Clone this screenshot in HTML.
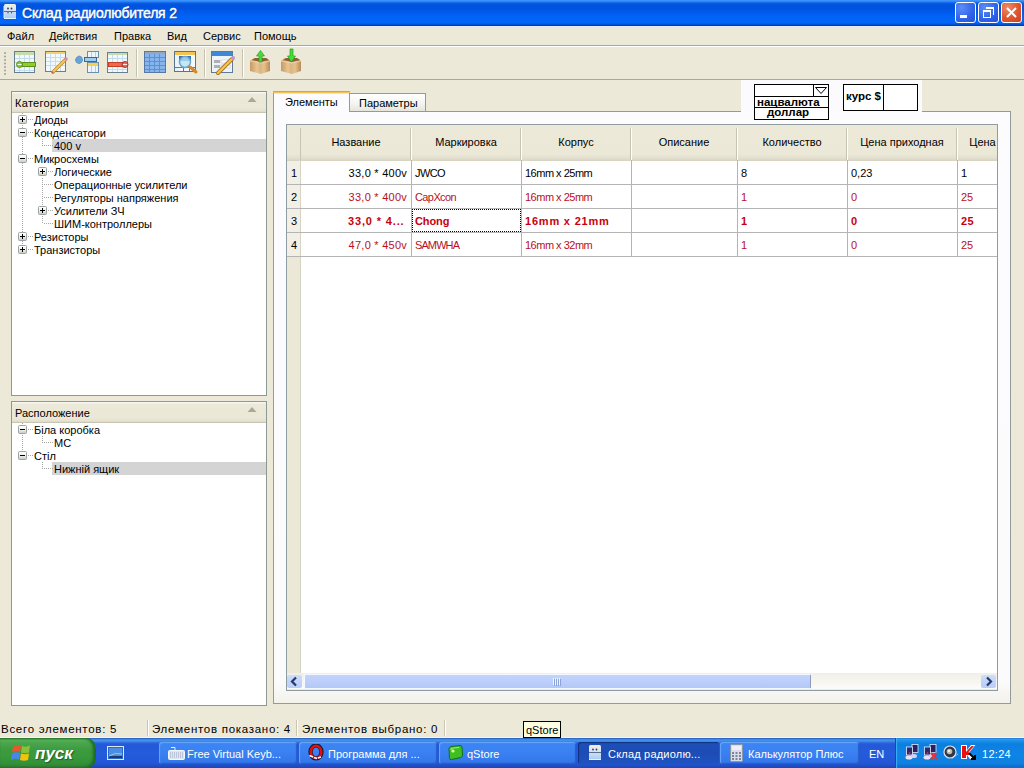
<!DOCTYPE html>
<html><head><meta charset="utf-8">
<style>
*{box-sizing:border-box;margin:0;padding:0}
html,body{width:1024px;height:768px;overflow:hidden;background:#ece9d8;font-family:"Liberation Sans",sans-serif;font-size:11px;color:#000}
.a{position:absolute}
.t{position:absolute;white-space:nowrap;line-height:13px}
#title{left:0;top:0;width:1024px;height:26px;background:linear-gradient(#3d95ff 0,#3a90fc 1px,#0b5fe4 3px,#0053de 5px,#0054e0 9px,#005bec 12px,#0064f7 17px,#0067f6 23px,#0048c8 25px,#002e9a 26px)}
#menu{left:0;top:26px;width:1024px;height:20px;background:linear-gradient(#e6ecfa 0,#e6ecfa 1px,#ece9d8 1px);border-bottom:1px solid #aca899}
.panel{position:absolute;border:1px solid #8b9894;background:#fff}
.phead{position:absolute;left:0;top:0;right:0;height:21px;background:linear-gradient(#f6f6f2 0,#f6f6f2 1px,#ece9d9 2px,#ebe8d8 16px,#e4e1d0 19px,#dcd8c6 20px);border-bottom:1px solid #c9c5b3}
.tb{position:absolute;width:9px;height:9px;border:1px solid #919b9c;background:linear-gradient(#fff,#f0efe8 50%,#cfcbbd)}
.tb:before{content:"";position:absolute;left:1px;top:3px;width:5px;height:1px;background:#000}
.tb.p:after{content:"";position:absolute;left:3px;top:1px;width:1px;height:5px;background:#000}
.dv{position:absolute;width:1px;border-left:1px dotted #a0a0a0}
.dh{position:absolute;height:1px;border-top:1px dotted #a0a0a0}
</style></head><body>
<div id="title" class="a"></div>
<div class="t" style="left:22px;top:5px;color:#fff;font-size:14px;line-height:17px;letter-spacing:-0.2px;-webkit-text-stroke:0.45px #fff;text-shadow:1px 1px 0 #0a3aa0">Склад радиолюбителя 2</div>
<!-- title buttons -->
<div class="a" style="left:955px;top:2px;width:21px;height:21px;border:1px solid #fff;border-radius:3px;background:radial-gradient(circle at 30% 25%,#5b8df8,#2f62e8 60%,#2352d6)"></div>
<div class="a" style="left:960px;top:15px;width:7px;height:3px;background:#fff"></div>
<div class="a" style="left:978px;top:2px;width:21px;height:21px;border:1px solid #fff;border-radius:3px;background:radial-gradient(circle at 30% 25%,#5b8df8,#2f62e8 60%,#2352d6)"></div>
<div class="a" style="left:986px;top:7px;width:8px;height:8px;border:1px solid #fff;border-top-width:2px;border-left:none;border-bottom:none"></div>
<div class="a" style="left:983px;top:10px;width:8px;height:8px;border:1px solid #fff;border-top-width:2px"></div>
<div class="a" style="left:1001px;top:2px;width:21px;height:21px;border:1px solid #fff;border-radius:3px;background:radial-gradient(circle at 30% 25%,#f08a6a,#e0542e 55%,#cc4020)"></div>
<svg class="a" style="left:1001px;top:2px" width="21" height="21"><path d="M6 6 L15 15 M15 6 L6 15" stroke="#fff" stroke-width="2"/></svg>
<!-- app icon -->
<svg class="a" style="left:3px;top:4px" width="14" height="16"><defs><linearGradient id="ai" x1="0" y1="0" x2="0" y2="1"><stop offset="0" stop-color="#f4eedc"/><stop offset="0.25" stop-color="#e4e8f4"/><stop offset="0.6" stop-color="#c8dcf4"/><stop offset="1" stop-color="#a8c8ee"/></linearGradient></defs>
<rect x="1" y="0" width="12" height="15" rx="1.5" fill="url(#ai)"/>
<rect x="0.5" y="2" width="1" height="12" fill="#d8ecff"/>
<rect x="1" y="7" width="12" height="1" fill="#56708e"/>
<circle cx="5" cy="4.5" r="0.9" fill="#2a3a5a"/><circle cx="8.5" cy="4.5" r="0.9" fill="#2a3a5a"/>
<circle cx="5" cy="8.7" r="0.7" fill="#3a4a6a"/><circle cx="8.5" cy="8.7" r="0.7" fill="#3a4a6a"/>
<rect x="1" y="14" width="12" height="1" fill="#e0f4ff"/>
</svg>
<div id="menu" class="a"></div>
<div class="t" style="left:7px;top:30px">Файл</div>
<div class="t" style="left:49px;top:30px">Действия</div>
<div class="t" style="left:114px;top:30px">Правка</div>
<div class="t" style="left:167px;top:30px">Вид</div>
<div class="t" style="left:203px;top:30px">Сервис</div>
<div class="t" style="left:254px;top:30px">Помощь</div>
<!-- toolbar -->
<div class="a" style="left:0;top:46px;width:1024px;height:1px;background:#fff"></div>
<div class="a" style="left:0;top:47px;width:1024px;height:33px;background:#ece9d8;border-bottom:1px solid #aca899"></div>

<svg class="a" style="left:0;top:47px" width="320" height="33" viewBox="0 47 320 33">
<g fill="#a09e90"><circle cx="5" cy="53" r="1"/><circle cx="5" cy="56.5" r="1"/><circle cx="5" cy="60" r="1"/><circle cx="5" cy="63.5" r="1"/><circle cx="5" cy="67" r="1"/><circle cx="5" cy="70.5" r="1"/><circle cx="5" cy="74" r="1"/></g>
<!-- icon1 -->
<rect x="14.5" y="51.5" width="20" height="21" fill="#f2f8fc" stroke="#68808e"/>
<rect x="15" y="52" width="19" height="3" fill="#c4dcb0"/>
<g stroke="#c4dcef" stroke-width="1"><path d="M15 58.5h19M15 62.5h19M15 66.5h19M15 70.5h19M19.5 55v17M24.5 55v17M29.5 55v17"/></g>
<rect x="22.5" y="62.5" width="13" height="4" fill="#94cc2e" stroke="#5a9418"/>
<circle cx="19.5" cy="64.5" r="3" fill="#94cc2e" stroke="#5a9418"/>
<path d="M17.5 64.5 h4" stroke="#f4fff0" stroke-width="1"/>
<!-- icon2 -->
<rect x="45.5" y="51.5" width="20" height="20" fill="#f2f8fc" stroke="#68808e"/>
<rect x="46" y="52" width="19" height="2" fill="#f3d070"/>
<g stroke="#c4dcef"><path d="M46 57.5h19M46 61.5h19M46 65.5h19M50.5 54v17M55.5 54v17M60.5 54v17"/></g>
<path d="M53 72 L65.5 59.5" stroke="#b8842a" stroke-width="3.2" stroke-linecap="round"/>
<path d="M53 72 L65.5 59.5" stroke="#f8c858" stroke-width="1.8" stroke-linecap="round"/>
<circle cx="66" cy="59" r="1.8" fill="#c890c0"/>
<circle cx="52.5" cy="72.5" r="1" fill="#c85a48"/>
<!-- icon3 -->
<path d="M76.5 57.5 L79 56 L81.5 57 L82.5 60 L81.5 62.5 L79 63.5 L76.5 62.5 L75.5 60 Z" fill="#6aa4d4" stroke="#5b96c8"/>
<rect x="87.5" y="51.5" width="11" height="6" fill="#eef6fc" stroke="#6a90ae"/>
<path d="M91.5 52v5M95.5 52v5" stroke="#b0d0e8"/>
<rect x="84.5" y="57.5" width="12" height="4" fill="#9ccdf0" stroke="#3a6a90"/>
<rect x="87.5" y="62.5" width="11" height="10" fill="#eef6fc" stroke="#6a90ae"/>
<rect x="88" y="63" width="10" height="3" fill="#f6d054"/>
<path d="M91.5 66v6M95.5 66v6" stroke="#b0d0e8"/>
<!-- icon4 -->
<rect x="107.5" y="52.5" width="20" height="20" fill="#f2f8fc" stroke="#68808e"/>
<rect x="108" y="53" width="19" height="2" fill="#c4dcb0"/>
<g stroke="#c4dcef"><path d="M108 58.5h19M108 69.5h19M112.5 55v17M117.5 55v17M122.5 55v17"/></g>
<rect x="108.5" y="62.5" width="15" height="4" fill="#f06848" stroke="#c04028"/>
<circle cx="125" cy="64.5" r="3" fill="#f06848" stroke="#a83040"/>
<path d="M123 64.5 h4" stroke="#fff0ec" stroke-width="1"/>
<!-- sep1 -->
<rect x="136" y="49" width="1" height="28" fill="#c5c2b2"/><rect x="137" y="49" width="1" height="28" fill="#fff"/>
<!-- icon5 -->
<rect x="144.5" y="51.5" width="21" height="21" fill="#86b4ec" stroke="#5877a8"/>
<rect x="145" y="52" width="20" height="2" fill="#9aa6b8"/>
<g stroke="#5f8fd0"><path d="M145 57.5h20M145 61.5h20M145 65.5h20M145 69.5h20M149.5 54v18M154.5 54v18M159.5 54v18"/></g>
<!-- icon6 -->
<rect x="174.5" y="51.5" width="21" height="20" fill="#f4f9ff" stroke="#5d7389"/>
<rect x="175" y="52" width="20" height="3" fill="#f3c654"/>
<rect x="175" y="55" width="4" height="16" fill="#eaf2fb"/>
<path d="M175 67.5h20M183.5 67v4M189.5 67v4" stroke="#4f7ea5"/>
<rect x="179" y="56" width="12" height="5" fill="#2f72c0"/>
<circle cx="185" cy="62" r="5.5" fill="#b8e2f4" fill-opacity="0.8" stroke="#6aa6c8" stroke-width="1.5"/>
<path d="M190 67 L196 72" stroke="#d48a2a" stroke-width="3" stroke-linecap="round"/>
<!-- sep2 -->
<rect x="204" y="49" width="1" height="28" fill="#c5c2b2"/><rect x="205" y="49" width="1" height="28" fill="#fff"/>
<!-- icon7 -->
<rect x="211.5" y="51.5" width="21" height="21" fill="#eef4fb" stroke="#5d7b98"/>
<rect x="212" y="52" width="20" height="4" fill="#3e88d6"/>
<rect x="214" y="60" width="6" height="3" fill="#b0b0b0"/><rect x="221" y="60" width="9" height="3" fill="#fff" stroke="#c0c0c0" stroke-width="0.5"/>
<rect x="214" y="65" width="6" height="3" fill="#b0b0b0"/><rect x="221" y="65" width="9" height="3" fill="#fff" stroke="#c0c0c0" stroke-width="0.5"/>
<path d="M218 73 L232 59" stroke="#a8741e" stroke-width="4" stroke-linecap="round"/>
<path d="M218 73 L232 59" stroke="#f6c44a" stroke-width="2.4" stroke-linecap="round"/>
<circle cx="233" cy="58" r="2" fill="#b89ad0"/>
<!-- sep3 -->
<rect x="242" y="49" width="1" height="28" fill="#c5c2b2"/><rect x="243" y="49" width="1" height="28" fill="#fff"/>
<!-- box1 -->
<defs><linearGradient id="wood" x1="0" y1="0" x2="1" y2="0"><stop offset="0" stop-color="#c79a62"/><stop offset="0.35" stop-color="#e6c596"/><stop offset="0.5" stop-color="#dcb57e"/><stop offset="0.7" stop-color="#e4c290"/><stop offset="1" stop-color="#b98a55"/></linearGradient></defs>
<path d="M250 61 L254 58 L266 58 L270 61 L270 71 L261 74 L250 71 Z" fill="url(#wood)"/>
<path d="M252 60 L255 58 L266 58 L269 60 L261 62 Z" fill="#8d5f35"/>
<path d="M250 61 L261 63 L270 61" fill="none" stroke="#f0d8b0" stroke-width="0.8"/>
<path d="M259 62 V56 H256.5 L260.5 50.5 L264.5 56 H262 V62 Z" fill="#44dc3c" stroke="#22a01e" stroke-width="0.7"/>
<!-- box2 -->
<path d="M281 61 L285 58 L297 58 L301 61 L301 71 L292 74 L281 71 Z" fill="url(#wood)"/>
<path d="M283 60 L286 58 L297 58 L300 60 L292 62 Z" fill="#8d5f35"/>
<path d="M281 61 L292 63 L301 61" fill="none" stroke="#f0d8b0" stroke-width="0.8"/>
<path d="M290 49 H293 V56 H295.5 L291.5 62 L287.5 56 H290 Z" fill="#44dc3c" stroke="#22a01e" stroke-width="0.7"/>
</svg>

<!-- category panel -->
<div class="panel" style="left:11px;top:91px;width:256px;height:305px">
  <div class="phead"></div>
</div>
<div class="t" style="left:15px;top:97px;letter-spacing:0.3px">Категория</div>
<div class="t" style="left:34px;top:114px">Диоды</div>
<div class="t" style="left:34px;top:127px">Конденсатори</div>
<div class="a" style="left:52px;top:139px;width:214px;height:13px;background:#d4d4d4"></div>
<div class="t" style="left:54px;top:140px">400 v</div>
<div class="t" style="left:34px;top:153px">Микросхемы</div>
<div class="t" style="left:54px;top:166px">Логические</div>
<div class="t" style="left:54px;top:179px">Операционные усилители</div>
<div class="t" style="left:54px;top:192px">Регуляторы напряжения</div>
<div class="t" style="left:54px;top:205px">Усилители ЗЧ</div>
<div class="t" style="left:54px;top:218px">ШИМ-контроллеры</div>
<div class="t" style="left:34px;top:231px">Резисторы</div>
<div class="t" style="left:34px;top:244px">Транзисторы</div>
<svg class="a" style="left:0;top:0" width="270" height="768"><defs><linearGradient id="bg" x1="0" y1="0" x2="0" y2="1"><stop offset="0" stop-color="#fff"/><stop offset="0.5" stop-color="#f2f1ec"/><stop offset="1" stop-color="#c9c6b8"/></linearGradient></defs><g fill="#a5a5a5"><rect x="28" y="119" width="1" height="1"/><rect x="30" y="119" width="1" height="1"/><rect x="32" y="119" width="1" height="1"/><rect x="28" y="132" width="1" height="1"/><rect x="30" y="132" width="1" height="1"/><rect x="32" y="132" width="1" height="1"/><rect x="44" y="145" width="1" height="1"/><rect x="46" y="145" width="1" height="1"/><rect x="48" y="145" width="1" height="1"/><rect x="50" y="145" width="1" height="1"/><rect x="52" y="145" width="1" height="1"/><rect x="28" y="158" width="1" height="1"/><rect x="30" y="158" width="1" height="1"/><rect x="32" y="158" width="1" height="1"/><rect x="48" y="171" width="1" height="1"/><rect x="50" y="171" width="1" height="1"/><rect x="52" y="171" width="1" height="1"/><rect x="44" y="184" width="1" height="1"/><rect x="46" y="184" width="1" height="1"/><rect x="48" y="184" width="1" height="1"/><rect x="50" y="184" width="1" height="1"/><rect x="52" y="184" width="1" height="1"/><rect x="44" y="197" width="1" height="1"/><rect x="46" y="197" width="1" height="1"/><rect x="48" y="197" width="1" height="1"/><rect x="50" y="197" width="1" height="1"/><rect x="52" y="197" width="1" height="1"/><rect x="48" y="210" width="1" height="1"/><rect x="50" y="210" width="1" height="1"/><rect x="52" y="210" width="1" height="1"/><rect x="44" y="223" width="1" height="1"/><rect x="46" y="223" width="1" height="1"/><rect x="48" y="223" width="1" height="1"/><rect x="50" y="223" width="1" height="1"/><rect x="52" y="223" width="1" height="1"/><rect x="28" y="236" width="1" height="1"/><rect x="30" y="236" width="1" height="1"/><rect x="32" y="236" width="1" height="1"/><rect x="28" y="249" width="1" height="1"/><rect x="30" y="249" width="1" height="1"/><rect x="32" y="249" width="1" height="1"/><rect x="22" y="113" width="1" height="1"/><rect x="22" y="115" width="1" height="1"/><rect x="22" y="117" width="1" height="1"/><rect x="22" y="119" width="1" height="1"/><rect x="22" y="121" width="1" height="1"/><rect x="22" y="123" width="1" height="1"/><rect x="22" y="125" width="1" height="1"/><rect x="22" y="127" width="1" height="1"/><rect x="22" y="129" width="1" height="1"/><rect x="22" y="131" width="1" height="1"/><rect x="22" y="133" width="1" height="1"/><rect x="22" y="135" width="1" height="1"/><rect x="22" y="137" width="1" height="1"/><rect x="22" y="139" width="1" height="1"/><rect x="22" y="141" width="1" height="1"/><rect x="22" y="143" width="1" height="1"/><rect x="22" y="145" width="1" height="1"/><rect x="22" y="147" width="1" height="1"/><rect x="22" y="149" width="1" height="1"/><rect x="22" y="151" width="1" height="1"/><rect x="22" y="153" width="1" height="1"/><rect x="22" y="155" width="1" height="1"/><rect x="22" y="157" width="1" height="1"/><rect x="22" y="159" width="1" height="1"/><rect x="22" y="161" width="1" height="1"/><rect x="22" y="163" width="1" height="1"/><rect x="22" y="165" width="1" height="1"/><rect x="22" y="167" width="1" height="1"/><rect x="22" y="169" width="1" height="1"/><rect x="22" y="171" width="1" height="1"/><rect x="22" y="173" width="1" height="1"/><rect x="22" y="175" width="1" height="1"/><rect x="22" y="177" width="1" height="1"/><rect x="22" y="179" width="1" height="1"/><rect x="22" y="181" width="1" height="1"/><rect x="22" y="183" width="1" height="1"/><rect x="22" y="185" width="1" height="1"/><rect x="22" y="187" width="1" height="1"/><rect x="22" y="189" width="1" height="1"/><rect x="22" y="191" width="1" height="1"/><rect x="22" y="193" width="1" height="1"/><rect x="22" y="195" width="1" height="1"/><rect x="22" y="197" width="1" height="1"/><rect x="22" y="199" width="1" height="1"/><rect x="22" y="201" width="1" height="1"/><rect x="22" y="203" width="1" height="1"/><rect x="22" y="205" width="1" height="1"/><rect x="22" y="207" width="1" height="1"/><rect x="22" y="209" width="1" height="1"/><rect x="22" y="211" width="1" height="1"/><rect x="22" y="213" width="1" height="1"/><rect x="22" y="215" width="1" height="1"/><rect x="22" y="217" width="1" height="1"/><rect x="22" y="219" width="1" height="1"/><rect x="22" y="221" width="1" height="1"/><rect x="22" y="223" width="1" height="1"/><rect x="22" y="225" width="1" height="1"/><rect x="22" y="227" width="1" height="1"/><rect x="22" y="229" width="1" height="1"/><rect x="22" y="231" width="1" height="1"/><rect x="22" y="233" width="1" height="1"/><rect x="22" y="235" width="1" height="1"/><rect x="22" y="237" width="1" height="1"/><rect x="22" y="239" width="1" height="1"/><rect x="22" y="241" width="1" height="1"/><rect x="22" y="243" width="1" height="1"/><rect x="22" y="245" width="1" height="1"/><rect x="22" y="247" width="1" height="1"/><rect x="22" y="249" width="1" height="1"/><rect x="42" y="139" width="1" height="1"/><rect x="42" y="141" width="1" height="1"/><rect x="42" y="143" width="1" height="1"/><rect x="42" y="145" width="1" height="1"/><rect x="42" y="178" width="1" height="1"/><rect x="42" y="180" width="1" height="1"/><rect x="42" y="182" width="1" height="1"/><rect x="42" y="184" width="1" height="1"/><rect x="42" y="186" width="1" height="1"/><rect x="42" y="188" width="1" height="1"/><rect x="42" y="190" width="1" height="1"/><rect x="42" y="192" width="1" height="1"/><rect x="42" y="194" width="1" height="1"/><rect x="42" y="196" width="1" height="1"/><rect x="42" y="198" width="1" height="1"/><rect x="42" y="200" width="1" height="1"/><rect x="42" y="202" width="1" height="1"/><rect x="42" y="204" width="1" height="1"/><rect x="42" y="206" width="1" height="1"/><rect x="42" y="208" width="1" height="1"/><rect x="42" y="210" width="1" height="1"/><rect x="42" y="212" width="1" height="1"/><rect x="42" y="214" width="1" height="1"/><rect x="42" y="216" width="1" height="1"/><rect x="42" y="218" width="1" height="1"/><rect x="42" y="220" width="1" height="1"/><rect x="42" y="222" width="1" height="1"/></g><rect x="18.5" y="115.5" width="8" height="8" rx="1" fill="url(#bg)" stroke="#9aa3a6"/><rect x="20" y="119" width="5" height="1" fill="#000"/><rect x="22" y="117" width="1" height="5" fill="#000"/><rect x="18.5" y="128.5" width="8" height="8" rx="1" fill="url(#bg)" stroke="#9aa3a6"/><rect x="20" y="132" width="5" height="1" fill="#000"/><rect x="18.5" y="154.5" width="8" height="8" rx="1" fill="url(#bg)" stroke="#9aa3a6"/><rect x="20" y="158" width="5" height="1" fill="#000"/><rect x="38.5" y="167.5" width="8" height="8" rx="1" fill="url(#bg)" stroke="#9aa3a6"/><rect x="40" y="171" width="5" height="1" fill="#000"/><rect x="42" y="169" width="1" height="5" fill="#000"/><rect x="38.5" y="206.5" width="8" height="8" rx="1" fill="url(#bg)" stroke="#9aa3a6"/><rect x="40" y="210" width="5" height="1" fill="#000"/><rect x="42" y="208" width="1" height="5" fill="#000"/><rect x="18.5" y="232.5" width="8" height="8" rx="1" fill="url(#bg)" stroke="#9aa3a6"/><rect x="20" y="236" width="5" height="1" fill="#000"/><rect x="22" y="234" width="1" height="5" fill="#000"/><rect x="18.5" y="245.5" width="8" height="8" rx="1" fill="url(#bg)" stroke="#9aa3a6"/><rect x="20" y="249" width="5" height="1" fill="#000"/><rect x="22" y="247" width="1" height="5" fill="#000"/></svg>

<svg class="a" style="left:247px;top:96px" width="10" height="7"><path d="M0.5 6 L5 1 L9.5 6 Z" fill="#aca899"/></svg>
<!-- location panel -->
<div class="panel" style="left:11px;top:401px;width:256px;height:305px">
  <div class="phead"></div>
</div>
<div class="t" style="left:15px;top:407px">Расположение</div>
<svg class="a" style="left:247px;top:406px" width="10" height="7"><path d="M0.5 6 L5 1 L9.5 6 Z" fill="#aca899"/></svg>

<div class="t" style="left:34px;top:424px">Біла коробка</div>
<div class="t" style="left:54px;top:437px">МС</div>
<div class="t" style="left:34px;top:450px">Стіл</div>
<div class="a" style="left:52px;top:462px;width:214px;height:13px;background:#d4d4d4"></div>
<div class="t" style="left:54px;top:463px">Нижній ящик</div>
<svg class="a" style="left:0;top:0" width="270" height="768"><defs><linearGradient id="bg" x1="0" y1="0" x2="0" y2="1"><stop offset="0" stop-color="#fff"/><stop offset="0.5" stop-color="#f2f1ec"/><stop offset="1" stop-color="#c9c6b8"/></linearGradient></defs><g fill="#a5a5a5"><rect x="28" y="429" width="1" height="1"/><rect x="30" y="429" width="1" height="1"/><rect x="32" y="429" width="1" height="1"/><rect x="44" y="442" width="1" height="1"/><rect x="46" y="442" width="1" height="1"/><rect x="48" y="442" width="1" height="1"/><rect x="50" y="442" width="1" height="1"/><rect x="52" y="442" width="1" height="1"/><rect x="28" y="455" width="1" height="1"/><rect x="30" y="455" width="1" height="1"/><rect x="32" y="455" width="1" height="1"/><rect x="44" y="468" width="1" height="1"/><rect x="46" y="468" width="1" height="1"/><rect x="48" y="468" width="1" height="1"/><rect x="50" y="468" width="1" height="1"/><rect x="52" y="468" width="1" height="1"/><rect x="22" y="423" width="1" height="1"/><rect x="22" y="425" width="1" height="1"/><rect x="22" y="427" width="1" height="1"/><rect x="22" y="429" width="1" height="1"/><rect x="22" y="431" width="1" height="1"/><rect x="22" y="433" width="1" height="1"/><rect x="22" y="435" width="1" height="1"/><rect x="22" y="437" width="1" height="1"/><rect x="22" y="439" width="1" height="1"/><rect x="22" y="441" width="1" height="1"/><rect x="22" y="443" width="1" height="1"/><rect x="22" y="445" width="1" height="1"/><rect x="22" y="447" width="1" height="1"/><rect x="22" y="449" width="1" height="1"/><rect x="22" y="451" width="1" height="1"/><rect x="22" y="453" width="1" height="1"/><rect x="22" y="455" width="1" height="1"/><rect x="42" y="436" width="1" height="1"/><rect x="42" y="438" width="1" height="1"/><rect x="42" y="440" width="1" height="1"/><rect x="42" y="442" width="1" height="1"/><rect x="42" y="462" width="1" height="1"/><rect x="42" y="464" width="1" height="1"/><rect x="42" y="466" width="1" height="1"/><rect x="42" y="468" width="1" height="1"/></g><rect x="18.5" y="425.5" width="8" height="8" rx="1" fill="url(#bg)" stroke="#9aa3a6"/><rect x="20" y="429" width="5" height="1" fill="#000"/><rect x="18.5" y="451.5" width="8" height="8" rx="1" fill="url(#bg)" stroke="#9aa3a6"/><rect x="20" y="455" width="5" height="1" fill="#000"/></svg>

<!-- tab pane -->
<div class="a" style="left:273px;top:111px;width:738px;height:593px;background:linear-gradient(#fcfcfe 0,#fbfbfc 96.5%,#f3f1ea 100%);border:1px solid #919b9c"></div>
<div class="a" style="left:349px;top:93px;width:77px;height:18px;border:1px solid #919b9c;border-bottom:none;background:linear-gradient(#fff,#f3f3ef 60%,#e6e5dc)"></div>
<div class="t" style="left:359px;top:97px">Параметры</div>
<div class="a" style="left:273px;top:91px;width:77px;height:21px;background:#fcfcfe;border-left:1px solid #919b9c;border-right:1px solid #919b9c"></div>
<div class="a" style="left:273px;top:91px;width:77px;height:1px;background:#e3a03c"></div>
<div class="a" style="left:273px;top:92px;width:77px;height:1px;background:#f6c350"></div>
<div class="a" style="left:274px;top:93px;width:75px;height:1px;background:#fde7a8"></div>
<div class="t" style="left:285px;top:96px">Элементы</div>
<!-- currency -->
<div class="a" style="left:741px;top:80px;width:181px;height:32px;background:#fbfbfd"></div>
<div class="a" style="left:754px;top:84px;width:75px;height:36px;border:1px solid #000;background:#fff"></div>
<div class="a" style="left:755px;top:96px;width:73px;height:1px;background:#000"></div>
<div class="a" style="left:755px;top:107px;width:73px;height:1px;background:#000"></div>
<div class="a" style="left:813px;top:85px;width:1px;height:11px;background:#000"></div>
<svg class="a" style="left:814px;top:85px" width="14" height="11"><path d="M1.5 2.5 H12.5 L7 8.5 Z" fill="none" stroke="#000" stroke-width="1"/></svg>
<div class="t" style="left:757px;top:96px;font-weight:bold;font-size:11.5px;line-height:13px">нацвалюта</div>
<div class="t" style="left:767px;top:106px;font-weight:bold;font-size:11.5px;line-height:13px">доллар</div>
<div class="a" style="left:843px;top:84px;width:75px;height:27px;border:1px solid #000;background:#fff"></div>
<div class="a" style="left:883px;top:85px;width:1px;height:25px;background:#000"></div>
<div class="t" style="left:846px;top:90px;font-weight:bold;font-size:11.5px;line-height:13px">курс $</div>

<div class="a" style="left:286px;top:124px;width:712px;height:567px;background:#fff;border:1px solid #8f9ca3;overflow:hidden">
<div class="a" style="left:0;top:0;width:710px;height:36px;background:linear-gradient(#ece9d9 0,#ebe8d8 29px,#e3e0cf 33px,#d6d2c1 36px)"></div>
<div class="a" style="left:0;top:36px;width:14px;height:512px;background:#ebe8d8;border-right:1px solid #d6d3c3"></div>
<div class="a" style="left:13px;top:3px;width:1px;height:32px;background:#c7c4b4"></div>
<div class="a" style="left:123px;top:3px;width:1px;height:32px;background:#c7c4b4"></div>
<div class="a" style="left:124px;top:3px;width:1px;height:32px;background:#fff"></div>
<div class="a" style="left:233px;top:3px;width:1px;height:32px;background:#c7c4b4"></div>
<div class="a" style="left:234px;top:3px;width:1px;height:32px;background:#fff"></div>
<div class="a" style="left:343px;top:3px;width:1px;height:32px;background:#c7c4b4"></div>
<div class="a" style="left:344px;top:3px;width:1px;height:32px;background:#fff"></div>
<div class="a" style="left:449px;top:3px;width:1px;height:32px;background:#c7c4b4"></div>
<div class="a" style="left:450px;top:3px;width:1px;height:32px;background:#fff"></div>
<div class="a" style="left:559px;top:3px;width:1px;height:32px;background:#c7c4b4"></div>
<div class="a" style="left:560px;top:3px;width:1px;height:32px;background:#fff"></div>
<div class="a" style="left:669px;top:3px;width:1px;height:32px;background:#c7c4b4"></div>
<div class="a" style="left:670px;top:3px;width:1px;height:32px;background:#fff"></div>
<div class="a" style="left:779px;top:3px;width:1px;height:32px;background:#c7c4b4"></div>
<div class="a" style="left:780px;top:3px;width:1px;height:32px;background:#fff"></div>
<div class="t" style="left:14px;top:11px;width:110px;text-align:center">Название</div>
<div class="t" style="left:124px;top:11px;width:110px;text-align:center">Маркировка</div>
<div class="t" style="left:234px;top:11px;width:110px;text-align:center">Корпус</div>
<div class="t" style="left:344px;top:11px;width:106px;text-align:center">Описание</div>
<div class="t" style="left:450px;top:11px;width:110px;text-align:center">Количество</div>
<div class="t" style="left:560px;top:11px;width:110px;text-align:center">Цена приходная</div>
<div class="t" style="left:670px;top:11px;width:110px;text-align:center">Цена продажная</div>
<div class="a" style="left:0;top:36px;width:13px;height:23px;background:#f1efe6"></div>
<div class="a" style="left:0;top:59px;width:710px;height:1px;background:#b4b4b4"></div>
<div class="t" style="left:4px;top:42px">1</div>
<div class="t" style="left:14px;top:42px;width:106px;text-align:right;color:#000;font-weight:normal;letter-spacing:0.25px">33,0 * 400v</div>
<div class="t" style="left:128px;top:42px;color:#000;font-weight:normal;letter-spacing:-0.6px">JWCO</div>
<div class="t" style="left:238px;top:42px;color:#000;font-weight:normal;letter-spacing:-0.5px">16mm x 25mm</div>
<div class="t" style="left:454px;top:42px;color:#000;font-weight:normal;letter-spacing:0">8</div>
<div class="t" style="left:564px;top:42px;color:#000;font-weight:normal;letter-spacing:0">0,23</div>
<div class="t" style="left:674px;top:42px;color:#000;font-weight:normal;letter-spacing:0">1</div>
<div class="a" style="left:0;top:60px;width:13px;height:23px;background:#f1efe6"></div>
<div class="a" style="left:0;top:83px;width:710px;height:1px;background:#b4b4b4"></div>
<div class="t" style="left:4px;top:66px">2</div>
<div class="t" style="left:14px;top:66px;width:106px;text-align:right;color:#b8101e;font-weight:normal;letter-spacing:0.25px">33,0 * 400v</div>
<div class="t" style="left:128px;top:66px;color:#b8101e;font-weight:normal;letter-spacing:-0.6px">CapXcon</div>
<div class="t" style="left:238px;top:66px;color:#b8101e;font-weight:normal;letter-spacing:-0.5px">16mm x 25mm</div>
<div class="t" style="left:454px;top:66px;color:#b8101e;font-weight:normal;letter-spacing:0">1</div>
<div class="t" style="left:564px;top:66px;color:#b8101e;font-weight:normal;letter-spacing:0">0</div>
<div class="t" style="left:674px;top:66px;color:#b8101e;font-weight:normal;letter-spacing:0">25</div>
<div class="a" style="left:0;top:84px;width:13px;height:23px;background:#f1efe6"></div>
<div class="a" style="left:0;top:107px;width:710px;height:1px;background:#b4b4b4"></div>
<div class="t" style="left:4px;top:90px">3</div>
<div class="t" style="left:61px;top:90px;color:#c8000e;font-weight:bold;letter-spacing:0.85px">33,0 * 4...</div>
<div class="t" style="left:128px;top:90px;color:#c8000e;font-weight:bold;letter-spacing:-0.1px">Chong</div>
<div class="t" style="left:238px;top:90px;color:#c8000e;font-weight:bold;letter-spacing:0.8px">16mm x 21mm</div>
<div class="t" style="left:454px;top:90px;color:#c8000e;font-weight:bold;letter-spacing:0.5px">1</div>
<div class="t" style="left:564px;top:90px;color:#c8000e;font-weight:bold;letter-spacing:0.5px">0</div>
<div class="t" style="left:674px;top:90px;color:#c8000e;font-weight:bold;letter-spacing:0.5px">25</div>
<div class="a" style="left:0;top:108px;width:13px;height:23px;background:#f1efe6"></div>
<div class="a" style="left:0;top:131px;width:710px;height:1px;background:#b4b4b4"></div>
<div class="t" style="left:4px;top:114px">4</div>
<div class="t" style="left:14px;top:114px;width:106px;text-align:right;color:#b8101e;font-weight:normal;letter-spacing:0.25px">47,0 * 450v</div>
<div class="t" style="left:128px;top:114px;color:#b8101e;font-weight:normal;letter-spacing:-0.9px">SAMWHA</div>
<div class="t" style="left:238px;top:114px;color:#b8101e;font-weight:normal;letter-spacing:-0.5px">16mm x 32mm</div>
<div class="t" style="left:454px;top:114px;color:#b8101e;font-weight:normal;letter-spacing:0">1</div>
<div class="t" style="left:564px;top:114px;color:#b8101e;font-weight:normal;letter-spacing:0">0</div>
<div class="t" style="left:674px;top:114px;color:#b8101e;font-weight:normal;letter-spacing:0">25</div>
<div class="a" style="left:124px;top:35px;width:1px;height:96px;background:#b4b4b4"></div>
<div class="a" style="left:234px;top:35px;width:1px;height:96px;background:#b4b4b4"></div>
<div class="a" style="left:344px;top:35px;width:1px;height:96px;background:#b4b4b4"></div>
<div class="a" style="left:450px;top:35px;width:1px;height:96px;background:#b4b4b4"></div>
<div class="a" style="left:560px;top:35px;width:1px;height:96px;background:#b4b4b4"></div>
<div class="a" style="left:670px;top:35px;width:1px;height:96px;background:#b4b4b4"></div>
<div class="a" style="left:780px;top:35px;width:1px;height:96px;background:#b4b4b4"></div>
<div class="a" style="left:125px;top:84px;width:109px;height:23px;border:1px dotted #000"></div>
<div class="a" style="left:0;top:548px;width:710px;height:17px;background:linear-gradient(#f0efe7,#f6f5f0 50%,#fdfdfa)"></div>
<div class="a" style="left:0px;top:550px;width:15px;height:13px;border-radius:2px;background:linear-gradient(#cddcfb,#b9cdf7)"></div>
<svg class="a" style="left:0px;top:550px" width="15" height="13"><path d="M9 2.5 L5 6.5 L9 10.5" fill="none" stroke="#27386a" stroke-width="2.2"/></svg>
<div class="a" style="left:694px;top:550px;width:15px;height:13px;border-radius:2px;background:linear-gradient(#cddcfb,#b9cdf7)"></div>
<svg class="a" style="left:694px;top:550px" width="15" height="13"><path d="M6 2.5 L10 6.5 L6 10.5" fill="none" stroke="#27386a" stroke-width="2.2"/></svg>
<div class="a" style="left:17px;top:549px;width:507px;height:15px;border-radius:2px;border:1px solid #f4f8ff;border-right-color:#8d9bc0;background:linear-gradient(#c3d3fb,#bccffa 50%,#b3c8f6)"></div><div class="a" style="left:0;top:564px;width:710px;height:1px;background:#e8ecf0"></div>
<svg class="a" style="left:266px;top:553px" width="8" height="8"><path d="M0.5 0v7M2.5 0v7M4.5 0v7M6.5 0v7" stroke="#f0f6ff"/><path d="M1.5 1v7M3.5 1v7M5.5 1v7M7.5 1v7" stroke="#8aa3d8"/></svg>

</div>
<!-- status bar -->
<div class="a" style="left:147px;top:720px;width:1px;height:16px;background:#c8c5b5"></div><div class="a" style="left:148px;top:720px;width:1px;height:16px;background:#fff"></div><div class="a" style="left:296px;top:720px;width:1px;height:16px;background:#c8c5b5"></div><div class="a" style="left:297px;top:720px;width:1px;height:16px;background:#fff"></div><div class="a" style="left:444px;top:720px;width:1px;height:16px;background:#c8c5b5"></div><div class="a" style="left:445px;top:720px;width:1px;height:16px;background:#fff"></div>
<div class="t" style="left:1px;top:723px;font-size:11.5px;letter-spacing:0.72px">Всего элементов: 5</div>
<div class="t" style="left:152px;top:723px;font-size:11.5px;letter-spacing:0.72px">Элементов показано: 4</div>
<div class="t" style="left:302px;top:723px;font-size:11.5px;letter-spacing:0.72px">Элементов выбрано: 0</div>

<!-- taskbar -->
<div class="a" style="left:0;top:737px;width:1024px;height:1px;background:#f4f3ee"></div>
<div class="a" style="left:0;top:738px;width:1024px;height:30px;background:linear-gradient(#1d4aae 0,#3a86e6 1px,#4592ea 3px,#2a62dc 5px,#2358d8 7px,#245cdc 50%,#2356d6 85%,#1c46b4 100%)"></div>
<!-- start button -->
<div class="a" style="left:0;top:738px;width:96px;height:30px;border-radius:0 10px 10px 0;background:linear-gradient(#2f7f33 0,#55b058 2px,#4aa64d 5px,#3c9a3f 12px,#389a3b 60%,#33903a 85%,#2c7f30 100%);box-shadow:inset -3px 0 3px #1f6a24, inset 0 -1px 1px #2a7a2e"></div>
<svg class="a" style="left:10px;top:743px" width="22" height="20"><path d="M3 3.5 Q6 1 11 2.5 L10 9 Q6 7.5 2 9.5 Z" fill="#e8582a"/><path d="M12 3 Q16 4.5 20 2.5 L19 9.5 Q15 11 11 9.5 Z" fill="#86c23a"/><path d="M2 10.5 Q6 8.5 10 10 L9 16.5 Q5 15 1 17 Z" fill="#4a86e8"/><path d="M11 10.5 Q15 12 19 10.5 L18 17 Q14 18.5 10 17 Z" fill="#f4c20c"/></svg>
<div class="t" style="left:35px;top:744px;color:#fff;font-weight:bold;font-style:italic;font-size:17px;line-height:20px;text-shadow:1px 1px 1px #1f5a20">пуск</div>
<!-- quick launch -->
<svg class="a" style="left:107px;top:746px" width="18" height="16"><rect x="0.5" y="0.5" width="16" height="13" fill="#2a6acc" stroke="#dfe8f6"/><rect x="2" y="2" width="13" height="9" fill="#4b8de0"/><rect x="2" y="10" width="13" height="2" fill="#1f3a6a"/><path d="M2 10 Q8 6 15 8" stroke="#9cc6f0" fill="none"/></svg>
<div class="a" style="left:159px;top:742px;width:138px;height:22px;border-radius:3px;background:linear-gradient(#3d86f4,#3a80f2 50%,#3478ea 90%,#2c6ad8);box-shadow:inset 1px 1px 1px #6aa6fa, inset -1px -1px 1px #2a5cc8"></div><svg class="a" style="left:168px;top:746px" width="18" height="14"><path d="M3 1.5 H7 V4" stroke="#e8eef8" fill="none"/><rect x="0.5" y="4.5" width="16" height="9" rx="1" fill="#dfe6f2" stroke="#f4f7fc"/><path d="M2 7h13M2 9h13M2 11h13" stroke="#9aa6c0" stroke-dasharray="1 1"/></svg><div class="t" style="left:187px;top:748px;color:#fff">Free Virtual Keyb...</div>
<div class="a" style="left:299px;top:742px;width:138px;height:22px;border-radius:3px;background:linear-gradient(#3d86f4,#3a80f2 50%,#3478ea 90%,#2c6ad8);box-shadow:inset 1px 1px 1px #6aa6fa, inset -1px -1px 1px #2a5cc8"></div><svg class="a" style="left:308px;top:744px" width="16" height="17"><ellipse cx="8" cy="8" rx="5.5" ry="6.5" fill="none" stroke="#101830" stroke-width="4.2"/><ellipse cx="8" cy="8" rx="5.3" ry="6.3" fill="none" stroke="#e01010" stroke-width="2.6"/><path d="M1.5 11.5 L5 13 M6 13.5 L9 14.5 M10 14 L13 13" stroke="#fff" stroke-width="1.6"/></svg><div class="t" style="left:328px;top:748px;color:#fff">Программа для ...</div>
<div class="a" style="left:439px;top:742px;width:137px;height:22px;border-radius:3px;background:linear-gradient(#3d86f4,#3a80f2 50%,#3478ea 90%,#2c6ad8);box-shadow:inset 1px 1px 1px #6aa6fa, inset -1px -1px 1px #2a5cc8"></div><svg class="a" style="left:447px;top:744px" width="17" height="17"><path d="M2 5 Q2 3 4 2.5 L13 1.5 Q15 1.5 15 3.5 L15.5 11 Q15.5 13 13.5 13.5 L4.5 15.5 Q2.5 16 2.5 14 Z" fill="#3cc020" stroke="#1a6a20" stroke-width="1"/><path d="M4 6 Q4 4 6 4 L12 3.5" stroke="#a0f070" stroke-width="1.2" fill="none"/><circle cx="6" cy="7" r="1.6" fill="#e8ffa0"/></svg><div class="t" style="left:467px;top:748px;color:#fff">qStore</div>
<div class="a" style="left:578px;top:742px;width:141px;height:22px;border-radius:3px;background:linear-gradient(#1e4fb8,#1c4cb4 50%,#2053bf);box-shadow:inset 1px 1px 1px #10307a"></div><svg class="a" style="left:588px;top:745px" width="14" height="16"><rect x="1" y="0" width="12" height="15" rx="1.5" fill="url(#ai)"/><rect x="1" y="7" width="12" height="1" fill="#56708e"/><circle cx="5" cy="4.5" r="0.9" fill="#2a3a5a"/><circle cx="8.5" cy="4.5" r="0.9" fill="#2a3a5a"/><rect x="1" y="14" width="12" height="1" fill="#e0f4ff"/></svg><div class="t" style="left:608px;top:748px;color:#fff;letter-spacing:0.2px">Склад радиолю...</div>
<div class="a" style="left:720px;top:742px;width:139px;height:22px;border-radius:3px;background:linear-gradient(#3d86f4,#3a80f2 50%,#3478ea 90%,#2c6ad8);box-shadow:inset 1px 1px 1px #6aa6fa, inset -1px -1px 1px #2a5cc8"></div><svg class="a" style="left:730px;top:744px" width="14" height="18"><rect x="0.5" y="0.5" width="12" height="17" rx="1" fill="#d8dde8" stroke="#8a94a8"/><rect x="2" y="2" width="9" height="4" fill="#eef"/><g fill="#7a849a"><rect x="2" y="8" width="2" height="2"/><rect x="5.5" y="8" width="2" height="2"/><rect x="9" y="8" width="2" height="2"/><rect x="2" y="11" width="2" height="2"/><rect x="5.5" y="11" width="2" height="2"/><rect x="9" y="11" width="2" height="2"/><rect x="2" y="14" width="2" height="2"/><rect x="5.5" y="14" width="2" height="2"/><rect x="9" y="14" width="2" height="2"/></g></svg><div class="t" style="left:748px;top:748px;color:#fff">Калькулятор Плюс</div>
<div class="t" style="left:869px;top:748px;color:#fff">EN</div>
<!-- tray -->
<div class="a" style="left:895px;top:738px;width:129px;height:30px;background:linear-gradient(#1e5ec8 0,#2aa0f0 1px,#1890e8 3px,#0c7ee0 6px,#0d85e6 50%,#0f80e0 85%,#0b64c8 100%);box-shadow:inset 1px 0 0 #1a4aa0,inset 2px 0 1px #40b0f8"></div>
<svg class="a" style="left:904px;top:744px" width="75" height="18"><g><rect x="8" y="0.5" width="6" height="8" fill="#2a2060" stroke="#e0e8ff" stroke-width="0.8"/><rect x="2.5" y="3" width="6" height="8" fill="#302868" stroke="#e8eeff" stroke-width="0.8"/><circle cx="5.5" cy="9" r="1" fill="#c03050"/><ellipse cx="5" cy="13.5" rx="3.5" ry="2" fill="#e8e0f8"/><ellipse cx="10" cy="12" rx="3" ry="2" fill="#d8d0f0"/></g><g transform="translate(18,0)"><rect x="8" y="0.5" width="6" height="8" fill="#2a2060" stroke="#e0e8ff" stroke-width="0.8"/><rect x="2.5" y="3" width="6" height="8" fill="#302868" stroke="#e8eeff" stroke-width="0.8"/><circle cx="5.5" cy="9" r="1" fill="#c03050"/><ellipse cx="5" cy="13.5" rx="3.5" ry="2" fill="#e8e0f8"/><ellipse cx="10" cy="12" rx="3" ry="2" fill="#d8d0f0"/><path d="M9 9 L14.5 15 M14.5 9 L9 15" stroke="#e83030" stroke-width="2"/></g><g transform="translate(39,0)"><circle cx="7" cy="8" r="6" fill="#303848" stroke="#dde4f0" stroke-width="1.2"/><circle cx="6.5" cy="7.5" r="2.8" fill="#c8b8a8"/><circle cx="6" cy="7" r="1.2" fill="#f8f0e8"/><path d="M9.5 14 L15 10" stroke="#c8d8ff" stroke-width="1" stroke-dasharray="1.5 1"/></g><g transform="translate(56,0)"><path d="M1 1 H7 V6 L11 1 H15.5 L9.5 8 L15.5 15 H10 L7 11 V15 H1 Z" fill="#fff"/><path d="M2 2 H6 V8 L11.5 2 H14 L8.5 8 L11 11 L6 11 V14 H2 Z" fill="#e81010"/><path d="M9 9 L15 15 M15 11 V15 H11" stroke="#000" stroke-width="2"/></g></svg>
<div class="t" style="left:982px;top:748px;color:#fff;letter-spacing:0.3px">12:24</div>
<!-- tooltip -->
<div class="a" style="left:523px;top:721px;width:38px;height:17px;background:#ffffe1;border:1px solid #000"></div>
<div class="t" style="left:526px;top:724px">qStore</div>

</body></html>
